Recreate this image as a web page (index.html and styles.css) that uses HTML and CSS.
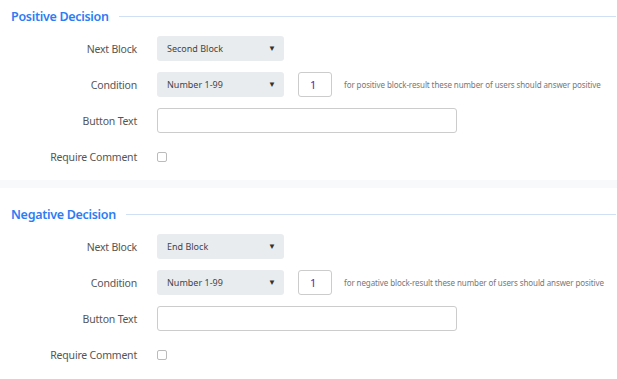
FILE: index.html
```html
<!DOCTYPE html>
<html>
<head>
<meta charset="utf-8">
<link rel="stylesheet" href="styles.css">
</head>
<body>
<section class="card card-first">
  <div class="legend"><span class="legend-title">Positive Decision</span><span class="legend-line"></span></div>
  <div class="form">
    <div class="row">
      <label class="label">Next Block</label>
      <div class="control"><div class="select"><span>Second Block</span><span class="caret">&#9660;</span></div></div>
    </div>
    <div class="row">
      <label class="label">Condition</label>
      <div class="control">
        <div class="select"><span>Number 1-99</span><span class="caret">&#9660;</span></div>
        <div class="num">1</div>
        <span class="help">for positive block-result these number of users should answer positive</span>
      </div>
    </div>
    <div class="row">
      <label class="label">Button Text</label>
      <div class="control"><div class="text-input"></div></div>
    </div>
    <div class="row">
      <label class="label">Require Comment</label>
      <div class="control"><span class="checkbox"></span></div>
    </div>
  </div>
</section>
<div class="divider"></div>
<section class="card">
  <div class="legend"><span class="legend-title">Negative Decision</span><span class="legend-line"></span></div>
  <div class="form">
    <div class="row">
      <label class="label">Next Block</label>
      <div class="control"><div class="select"><span>End Block</span><span class="caret">&#9660;</span></div></div>
    </div>
    <div class="row">
      <label class="label">Condition</label>
      <div class="control">
        <div class="select"><span>Number 1-99</span><span class="caret">&#9660;</span></div>
        <div class="num">1</div>
        <span class="help">for negative block-result these number of users should answer positive</span>
      </div>
    </div>
    <div class="row">
      <label class="label">Button Text</label>
      <div class="control"><div class="text-input"></div></div>
    </div>
    <div class="row">
      <label class="label">Require Comment</label>
      <div class="control"><span class="checkbox"></span></div>
    </div>
  </div>
</section>
</body>
</html>
```

FILE: styles.css
```css
html, body {
  margin: 0;
  padding: 0;
  background: #ffffff;
  font-family: "Noto Sans", "Open Sans", sans-serif;
  color: #555;
}
.card {
  background: #fff;
  padding: 16px 0 11px 11px;
}
.card-first {
  padding-top: 6px;
}
.divider {
  height: 8px;
  background: #f8f9fa;
}
.legend {
  display: flex;
  align-items: center;
  height: 20px;
}
.legend-title {
  font-size: 12.5px;
  font-weight: 600;
  color: #2d7cf3;
  letter-spacing: -0.3px;
}
.legend-line {
  flex: 1;
  height: 1px;
  background: #cfe0f4;
  margin-left: 10px;
  margin-right: 1px;
}
.form {
  display: flex;
  flex-direction: column;
  gap: 11px;
  margin-top: 10px;
}
.row {
  display: flex;
  align-items: center;
  height: 25px;
}
.label {
  width: 126px;
  text-align: right;
  font-size: 10.5px;
  color: #555;
  padding-right: 20px;
  box-sizing: content-box;
  letter-spacing: -0.2px;
}
.control {
  display: flex;
  align-items: center;
}
.select {
  width: 127px;
  height: 25px;
  box-sizing: border-box;
  background: #e9ecef;
  border-radius: 3px;
  display: flex;
  align-items: center;
  justify-content: space-between;
  padding: 0 8px 0 10px;
  font-size: 9px;
  color: #444;
}
.caret {
  font-size: 8px;
  color: #333;
  margin-top: -3px;
}
.num {
  width: 34px;
  height: 25px;
  box-sizing: border-box;
  border: 1px solid #ccc;
  border-radius: 3px;
  margin-left: 14px;
  font-size: 11px;
  color: #6b2393;
  padding-left: 11px;
  line-height: 23px;
}
.help {
  margin-left: 12px;
  font-size: 8px;
  color: #777;
  letter-spacing: -0.1px;
}
.text-input {
  width: 300px;
  height: 25px;
  box-sizing: border-box;
  border: 1px solid #ccc;
  border-radius: 3px;
}
.checkbox {
  width: 10px;
  height: 10px;
  box-sizing: border-box;
  border: 1px solid #bbb;
  border-radius: 2px;
}
```
